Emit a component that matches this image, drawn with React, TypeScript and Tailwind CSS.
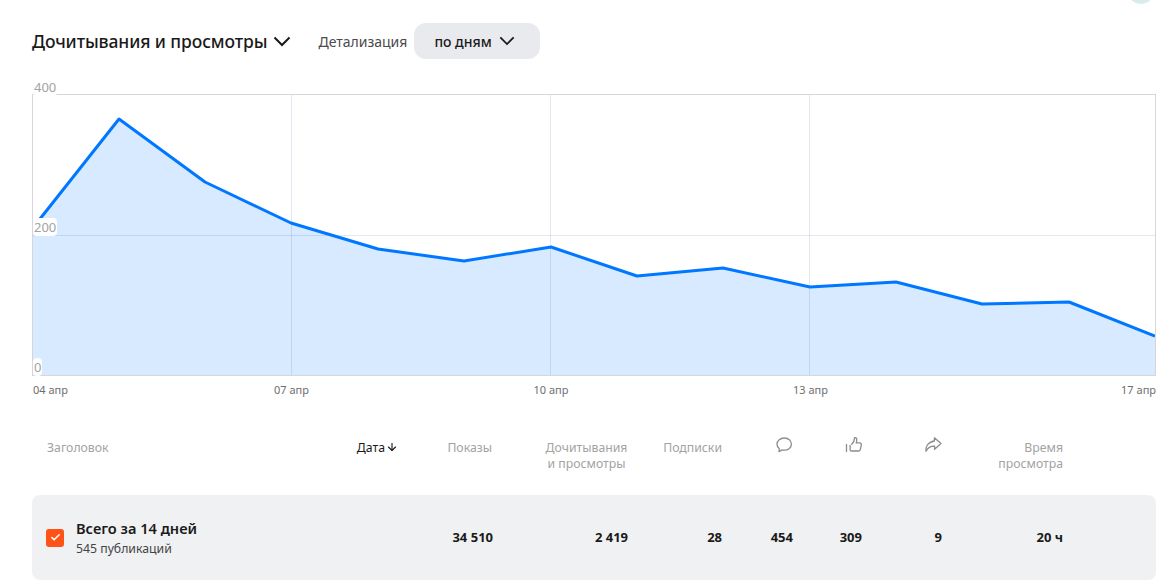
import { ArrowDown, Check } from "lucide-react";

const points = [
  [-1, 134], [86, 24], [172, 87], [258, 128], [345, 154], [431, 166], [518, 152],
  [604, 181], [690, 173], [777, 192], [863, 187], [949, 209], [1036, 207], [1122, 241],
];
const line = points.map((p) => p.join(",")).join(" ");
const cols = "grid grid-cols-[298px_68px_95px_135px_94px_71px_69px_80px_121px]";

function Chevron({ className }: { className?: string }) {
  return (
    <svg width="18" height="11" viewBox="0 0 18 11" fill="none" stroke="currentColor" strokeWidth="2" className={className}>
      <path d="M1.5 1.5 9 9l7.5-7.5" />
    </svg>
  );
}

function Chart() {
  return (
    <div className="relative h-[282px] w-[1124px] border border-[#d6d6da]">
      <svg width="1122" height="280" viewBox="0 0 1122 280" className="block">
        <polygon points={`-1,280 ${line} 1122,280`} fill="#d8eaff" />
        <g stroke="#3a5f9f" strokeOpacity="0.15" strokeWidth="1">
          <line x1="258.5" y1="0" x2="258.5" y2="280" />
          <line x1="517.5" y1="0" x2="517.5" y2="280" />
          <line x1="776.5" y1="0" x2="776.5" y2="280" />
          <line x1="0" y1="140.5" x2="1122" y2="140.5" />
        </g>
        <polyline points={line} fill="none" stroke="#0077ff" strokeWidth="3" strokeLinejoin="round" />
      </svg>
      <span className="absolute left-0 top-[-17px] rounded-sm bg-white px-[1px] py-[1.5px] text-[13px] leading-[15px] text-[#a3a3a3]">400</span>
      <span className="absolute left-0 top-[123px] rounded-sm bg-white px-[1px] py-[1.5px] text-[13px] leading-[15px] text-[#a3a3a3]">200</span>
      <span className="absolute left-0 top-[263px] rounded-sm bg-white px-[1px] py-[1.5px] text-[13px] leading-[15px] text-[#a3a3a3]">0</span>
    </div>
  );
}

export default function App() {
  return (
    <div className="relative h-[580px] w-[1172px] overflow-hidden bg-white font-['Noto_Sans',sans-serif] text-[#1a1a1a]">
      <div className="absolute left-[1128px] top-[-22px] h-[26px] w-[26px] rounded-full bg-[#d9ecec]" />

      <div className="flex h-[59px] items-end pl-[32px]">
        <div className="flex h-[36px] items-center">
          <h2 className="text-[17.5px] font-medium leading-[36px] tracking-[-0.1px]">Дочитывания и просмотры</h2>
          <Chevron className="ml-[6px]" />
          <span className="ml-[27px] text-[14px] text-[#4b4b4b]">Детализация</span>
          <button className="ml-[7px] flex h-[36px] w-[126px] items-center gap-[7px] rounded-xl bg-[#e9eaee] pl-[20px] text-[14px] font-medium">
            по дням
            <Chevron className="h-[10px] w-[16px]" />
          </button>
        </div>
      </div>

      <div className="mt-[35px] pl-[32px]">
        <Chart />
        <div className="mt-[6px] grid w-[1124px] grid-cols-[130px_259px_260px_259px_216px] text-center text-[11px] leading-[15px] text-[#6e6e6e]">
          <span className="pl-[1px] text-left">04 апр</span>
          <span>07 апр</span>
          <span>10 апр</span>
          <span>13 апр</span>
          <span className="text-right">17 апр</span>
        </div>
      </div>

      <div className={`${cols} mt-[43px] ml-[32px] h-[55px] text-right text-[12.25px] leading-[16px] text-[#a3a3a3]`}>
        <div className="pl-[15px] text-left">Заголовок</div>
        <div className="flex items-start justify-end text-[#1a1a1a]">
          Дата
          <ArrowDown className="mt-[1px] ml-[1px] h-[12px] w-[12px]" strokeWidth={2.25} />
        </div>
        <div className="pr-[1px]">Показы</div>
        <div className="pl-[52px] text-center">
          Дочитывания
          <br />и просмотры
        </div>
        <div>Подписки</div>
        <div className="flex justify-end">
          <svg width="18" height="18" viewBox="0 0 18 18" fill="none" stroke="#8c8c8c" strokeWidth="1.3" className="-mt-[4px]">
            <path d="M9.4 2C5.4 2 2 4.7 2 8.3c0 1.9 1 3.4 2.3 4.4l-.3 2.9 3.2-1.7c.7.2 1.4.3 2.2.3 3.9 0 7-2.7 7-6 0-3.5-3.1-6.2-7-6.2z" strokeLinejoin="round" />
          </svg>
        </div>
        <div className="flex justify-end">
          <svg width="18" height="18" viewBox="0 0 18 18" fill="none" stroke="#8c8c8c" strokeWidth="1.3" className="-mt-[4px] -mr-[1px]">
            <path d="M1.5 8.5v7M6.7 8.2c1.6-1.5 2.8-3.6 3-6.6 1.6-.3 2.5 1.2 2 3.3l-.5 2h3.6c1 0 1.7.9 1.5 1.9l-.9 4.5c-.2 1-1 1.7-2 1.7H6.7c-.9 0-1.6-.7-1.6-1.6V9.5" strokeLinejoin="round" strokeLinecap="round" />
          </svg>
        </div>
        <div className="flex justify-end">
          <svg width="18" height="18" viewBox="0 0 18 18" fill="none" stroke="#8c8c8c" strokeWidth="1.3" className="-mt-[4px]">
            <path d="M10.4 1.8 17 7.6l-6.4 5.6v-3.1c-3.8-.1-6.6 1.1-8.6 5.1-.6-4.6 1.8-9 8.4-10.2z" strokeLinejoin="round" />
          </svg>
        </div>
        <div>
          Время
          <br />
          просмотра
        </div>
      </div>

      <div className={`${cols} ml-[32px] h-[85px] w-[1124px] items-center rounded-lg bg-[#f0f1f3] text-right text-[13px] font-bold`}>
        <div className="flex items-center pl-[14px] text-left">
          <span className="flex h-[18px] w-[18px] items-center justify-center rounded-[3px] bg-[#ff5216]">
            <Check className="h-[11px] w-[11px] text-white" strokeWidth={3.5} />
          </span>
          <div className="ml-[12px]">
            <div className="whitespace-nowrap text-[14.6px] font-semibold leading-[22px]">Всего за 14 дней</div>
            <div className="whitespace-nowrap text-[12.25px] font-normal leading-[19px] text-[#444444]">545 публикаций</div>
          </div>
        </div>
        <div />
        <div>34 510</div>
        <div>2 419</div>
        <div>28</div>
        <div>454</div>
        <div>309</div>
        <div>9</div>
        <div>20 ч</div>
      </div>
    </div>
  );
}
